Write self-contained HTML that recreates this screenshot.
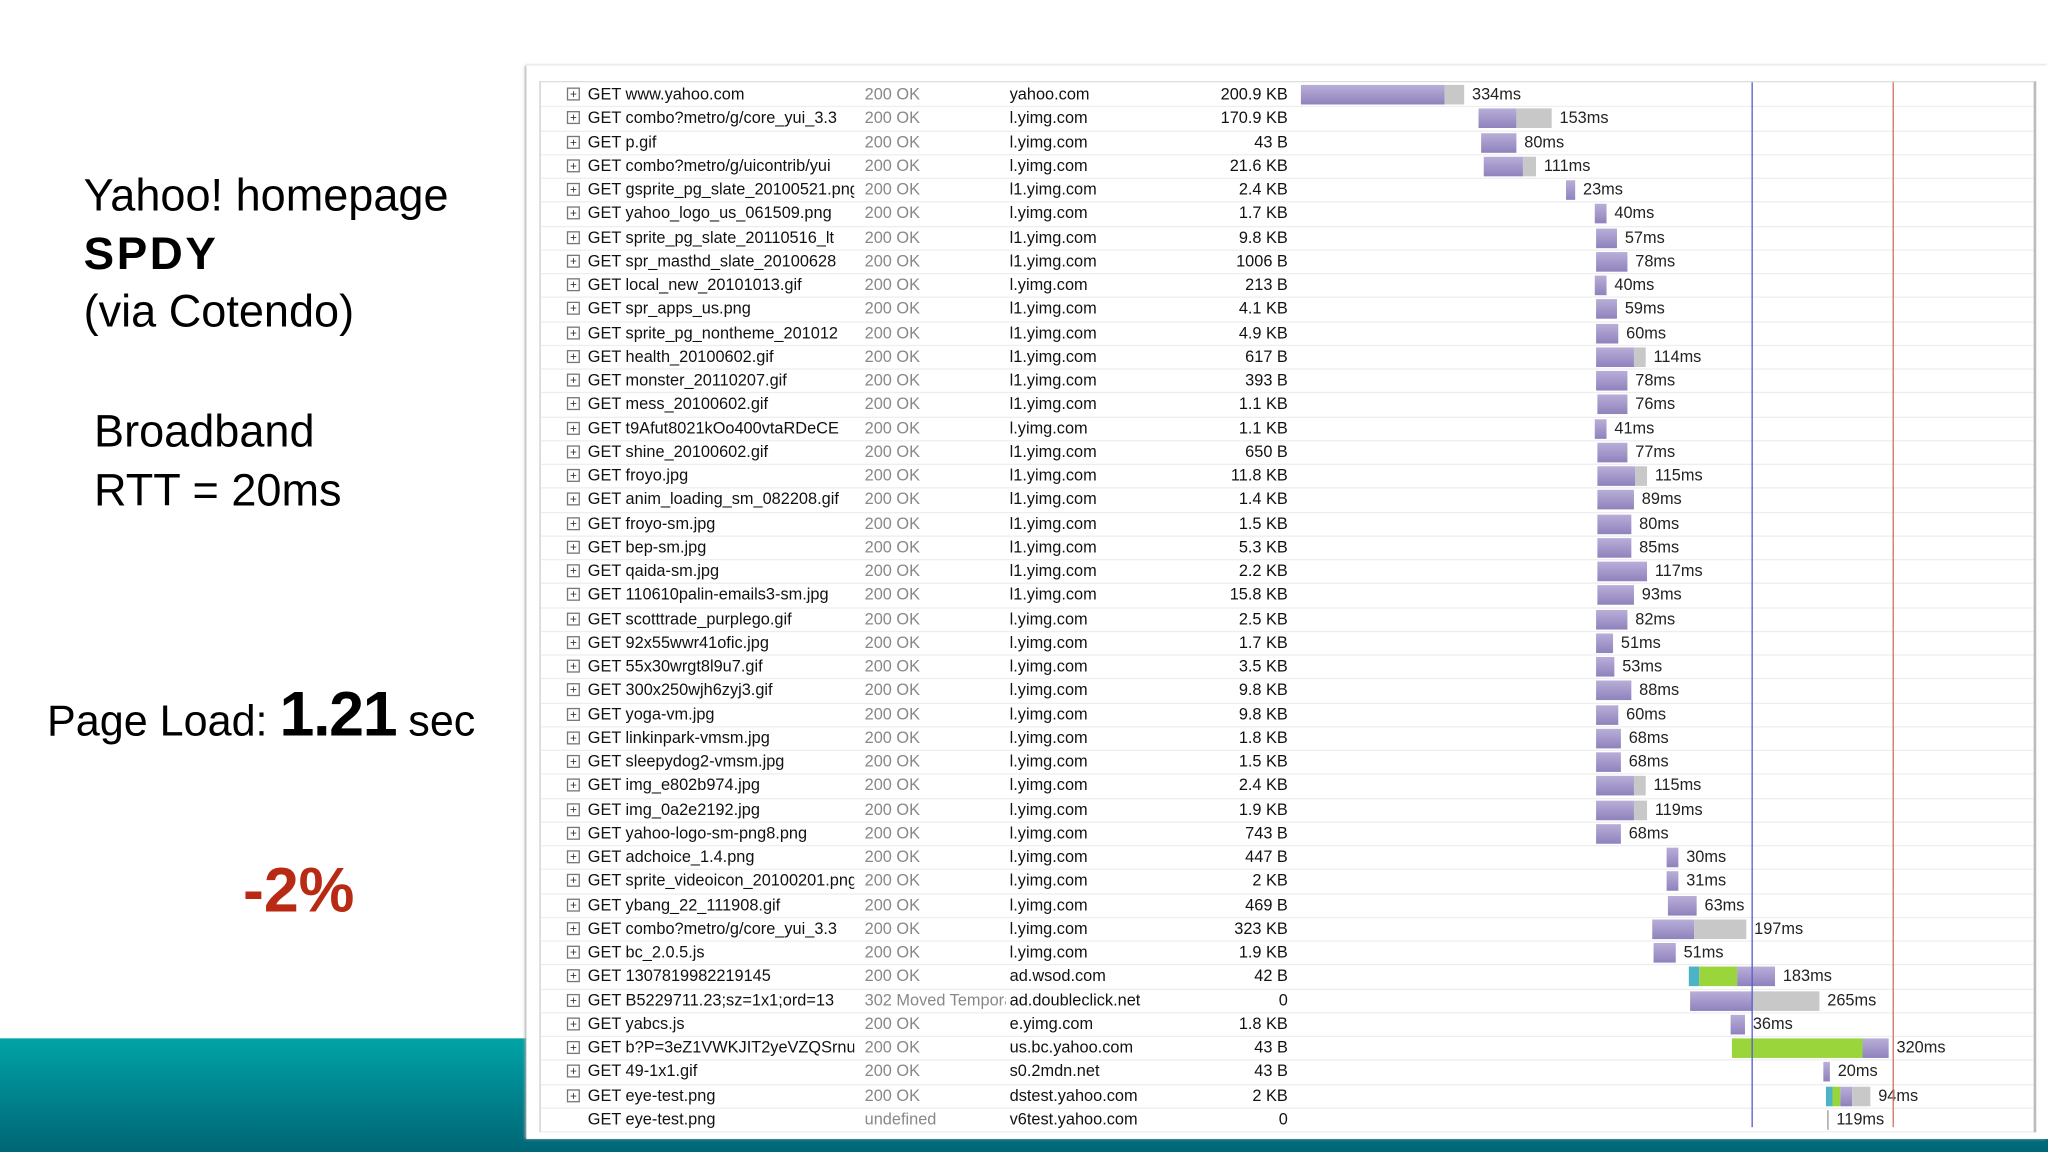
<!DOCTYPE html>
<html><head><meta charset="utf-8"><style>
html,body{margin:0;padding:0;width:2048px;height:1152px;overflow:hidden;background:#fff}
#w{position:absolute;left:0;top:0;width:1568px;height:882px;transform:scale(1.30612,1.30612);transform-origin:0 0;font-family:"Liberation Sans",sans-serif}
.t{position:absolute;color:#000;white-space:nowrap;z-index:5}
#band{position:absolute;left:0;top:795px;width:1568px;height:87px;background:linear-gradient(#00a4a6,#008a93 40%,#006675)}
#panel{position:absolute;left:403px;top:50px;width:1165px;height:822px;background:#fff;box-shadow:-1px 0 2px #aaa}
#tbl{position:absolute;left:413px;top:62px;width:1143px;height:804px;border-top:1px solid #ddd;border-left:1px solid #ccc;border-right:2px solid #bbb}
.r{position:absolute;left:0;width:1143px;height:18.25px;border-bottom:1px solid #eee;font-size:12.5px;line-height:18px;font-family:"Liberation Sans",sans-serif}
.r span{position:absolute;top:0;white-space:nowrap;overflow:hidden}
.pl{position:absolute;left:20px;top:4px;width:8px;height:8px;border:1px solid #777;font-size:9px;line-height:8px;text-align:center;color:#333}
.b{position:absolute;top:2px;height:15px}
</style></head><body><div id="w">
<div id="band"></div>
<div id="panel"></div>
<div id="tbl"></div>
<div class="t" style="left:64px;top:131px;font-size:34.5px">Yahoo! homepage</div>
<div class="t" style="left:64px;top:175px;font-size:35px;font-weight:bold;letter-spacing:2px">SPDY</div>
<div class="t" style="left:64px;top:220px;font-size:34.5px">(via Cotendo)</div>
<div class="t" style="left:72px;top:312px;font-size:34.5px">Broadband</div>
<div class="t" style="left:72px;top:357px;font-size:34.5px">RTT = 20ms</div>
<div class="t" style="left:36px;top:533px;font-size:33px">Page Load: <b style="font-size:48px;line-height:0;letter-spacing:-1px">1.21</b> sec</div>
<div class="t" style="left:186px;top:655px;font-size:48px;font-weight:bold;color:#b82a14">-2%</div>
</div>
<script>
var d=[
["www.yahoo.com","200 OK","yahoo.com","200.9 KB",[[995,1105,'p'],[1105,1120,'g']],"334ms"],
["combo?metro/g/core_yui_3.3","200 OK","l.yimg.com","170.9 KB",[[1131,1160,'p'],[1160,1187,'g']],"153ms"],
["p.gif","200 OK","l.yimg.com","43 B",[[1133,1160,'p']],"80ms"],
["combo?metro/g/uicontrib/yui","200 OK","l.yimg.com","21.6 KB",[[1135,1165,'p'],[1165,1175,'g']],"111ms"],
["gsprite_pg_slate_20100521.png","200 OK","l1.yimg.com","2.4 KB",[[1198,1205,'p']],"23ms"],
["yahoo_logo_us_061509.png","200 OK","l.yimg.com","1.7 KB",[[1220,1229,'p']],"40ms"],
["sprite_pg_slate_20110516_lt","200 OK","l1.yimg.com","9.8 KB",[[1221,1237,'p']],"57ms"],
["spr_masthd_slate_20100628","200 OK","l1.yimg.com","1006 B",[[1221,1245,'p']],"78ms"],
["local_new_20101013.gif","200 OK","l.yimg.com","213 B",[[1220,1229,'p']],"40ms"],
["spr_apps_us.png","200 OK","l1.yimg.com","4.1 KB",[[1221,1237,'p']],"59ms"],
["sprite_pg_nontheme_201012","200 OK","l1.yimg.com","4.9 KB",[[1221,1238,'p']],"60ms"],
["health_20100602.gif","200 OK","l1.yimg.com","617 B",[[1221,1250,'p'],[1250,1259,'g']],"114ms"],
["monster_20110207.gif","200 OK","l1.yimg.com","393 B",[[1221,1245,'p']],"78ms"],
["mess_20100602.gif","200 OK","l1.yimg.com","1.1 KB",[[1222,1245,'p']],"76ms"],
["t9Afut8021kOo400vtaRDeCE","200 OK","l.yimg.com","1.1 KB",[[1220,1229,'p']],"41ms"],
["shine_20100602.gif","200 OK","l1.yimg.com","650 B",[[1222,1245,'p']],"77ms"],
["froyo.jpg","200 OK","l1.yimg.com","11.8 KB",[[1222,1251,'p'],[1251,1260,'g']],"115ms"],
["anim_loading_sm_082208.gif","200 OK","l1.yimg.com","1.4 KB",[[1222,1250,'p']],"89ms"],
["froyo-sm.jpg","200 OK","l1.yimg.com","1.5 KB",[[1222,1248,'p']],"80ms"],
["bep-sm.jpg","200 OK","l1.yimg.com","5.3 KB",[[1222,1248,'p']],"85ms"],
["qaida-sm.jpg","200 OK","l1.yimg.com","2.2 KB",[[1222,1260,'p']],"117ms"],
["110610palin-emails3-sm.jpg","200 OK","l1.yimg.com","15.8 KB",[[1222,1250,'p']],"93ms"],
["scotttrade_purplego.gif","200 OK","l.yimg.com","2.5 KB",[[1221,1245,'p']],"82ms"],
["92x55wwr41ofic.jpg","200 OK","l.yimg.com","1.7 KB",[[1221,1234,'p']],"51ms"],
["55x30wrgt8l9u7.gif","200 OK","l.yimg.com","3.5 KB",[[1221,1235,'p']],"53ms"],
["300x250wjh6zyj3.gif","200 OK","l.yimg.com","9.8 KB",[[1221,1248,'p']],"88ms"],
["yoga-vm.jpg","200 OK","l.yimg.com","9.8 KB",[[1221,1238,'p']],"60ms"],
["linkinpark-vmsm.jpg","200 OK","l.yimg.com","1.8 KB",[[1221,1240,'p']],"68ms"],
["sleepydog2-vmsm.jpg","200 OK","l.yimg.com","1.5 KB",[[1221,1240,'p']],"68ms"],
["img_e802b974.jpg","200 OK","l.yimg.com","2.4 KB",[[1221,1250,'p'],[1250,1259,'g']],"115ms"],
["img_0a2e2192.jpg","200 OK","l.yimg.com","1.9 KB",[[1221,1250,'p'],[1250,1260,'g']],"119ms"],
["yahoo-logo-sm-png8.png","200 OK","l.yimg.com","743 B",[[1221,1240,'p']],"68ms"],
["adchoice_1.4.png","200 OK","l.yimg.com","447 B",[[1275,1284,'p']],"30ms"],
["sprite_videoicon_20100201.png","200 OK","l.yimg.com","2 KB",[[1275,1284,'p']],"31ms"],
["ybang_22_111908.gif","200 OK","l.yimg.com","469 B",[[1276,1298,'p']],"63ms"],
["combo?metro/g/core_yui_3.3","200 OK","l.yimg.com","323 KB",[[1264,1296,'p'],[1296,1336,'g']],"197ms"],
["bc_2.0.5.js","200 OK","l.yimg.com","1.9 KB",[[1265,1282,'p']],"51ms"],
["1307819982219145","200 OK","ad.wsod.com","42 B",[[1292,1300,'t'],[1300,1329,'n'],[1329,1358,'p']],"183ms"],
["B5229711.23;sz=1x1;ord=13","302 Moved Temporarily","ad.doubleclick.net","0",[[1293,1340,'p'],[1340,1392,'g']],"265ms"],
["yabcs.js","200 OK","e.yimg.com","1.8 KB",[[1324,1335,'p']],"36ms"],
["b?P=3eZ1VWKJIT2yeVZQSrnu","200 OK","us.bc.yahoo.com","43 B",[[1325,1425,'n'],[1425,1445,'p']],"320ms"],
["49-1x1.gif","200 OK","s0.2mdn.net","43 B",[[1395,1400,'p']],"20ms"],
["eye-test.png","200 OK","dstest.yahoo.com","2 KB",[[1397,1402,'t'],[1402,1408,'n'],[1408,1417,'p'],[1417,1431,'g']],"94ms"],
["eye-test.png","undefined","v6test.yahoo.com","0",[[1398,1399,'k']],"119ms"]];
var col={p:'linear-gradient(#b9aed8,#8f82bd)',g:'#c8c8c8',t:'#4cb3c8',n:'#9ad53c',k:'#999'};
var T=document.getElementById('tbl'),h='';
d.forEach(function(r,i){
 var y=i*18.25; var L=413;
 h+='<div class="r" style="top:'+y+'px">'+(i<43?'<div class="pl">+</div>':'')+
 '<span style="left:'+(449-L)+'px;width:204px;color:#111">GET '+r[0]+'</span>'+
 '<span style="left:'+(661-L)+'px;width:108px;color:#888">'+r[1]+'</span>'+
 '<span style="left:'+(772-L)+'px;width:110px;color:#111">'+r[2]+'</span>'+
 '<span style="left:'+(900-L)+'px;width:85px;text-align:right;color:#111">'+r[3]+'</span>';
 var e=0;r[4].forEach(function(b){h+='<div class="b" style="left:'+(b[0]-L)+'px;width:'+(b[1]-b[0])+'px;background:'+col[b[2]]+'"></div>';e=b[1];});
 h+='<span style="left:'+(e-L+6)+'px;color:#222">'+r[5]+'</span></div>';
});
h+='<div style="position:absolute;left:'+(1340-413)+'px;top:0;width:1px;height:800px;background:#5a5ad0"></div>';
h+='<div style="position:absolute;left:'+(1448-413)+'px;top:0;width:1px;height:800px;background:#d07060"></div>';
T.innerHTML=h;
</script></body></html>
